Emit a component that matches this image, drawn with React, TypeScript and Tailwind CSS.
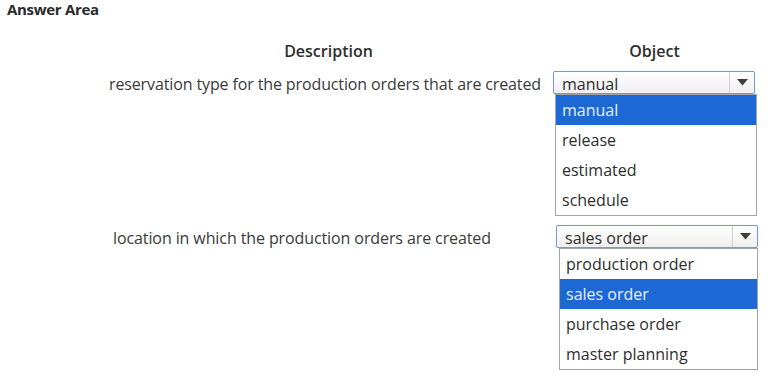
import React from "react";

function Select({ value }: { value: string }) {
  return (
    <div className="flex h-[23px] items-stretch rounded-[2px] border border-[#7d99c8] bg-gradient-to-b from-white to-[#efefef] shadow-[0_0_1px_#9fb6dc]">
      <div className="flex flex-1 items-center pl-[8px] text-[16px] leading-none text-[#2e2e2e]">
        <span className="mt-[3px]">{value}</span>
      </div>
      <div className="flex w-[25px] items-center justify-center border-l border-[#d0d0d0]">
        <svg width="11" height="7" viewBox="0 0 11 7">
          <path d="M0 0 H11 L5.5 6.5 Z" fill="#3d3d3d" />
        </svg>
      </div>
    </div>
  );
}

function List({ items, selected }: { items: string[]; selected: string }) {
  return (
    <div className="border border-[#a3a3a3] bg-white">
      {items.map((it) => (
        <div
          key={it}
          className={
            it === selected
              ? "flex h-[30px] items-center bg-[#1c68d4] pl-[6px] text-[16px] text-[#e8f0ff]"
              : "flex h-[30px] items-center pl-[6px] text-[16px] text-[#2e2e2e]"
          }
        >
          {it}
        </div>
      ))}
    </div>
  );
}

export default function App() {
  return (
    <div className="relative h-[385px] w-[771px] overflow-hidden bg-white font-['Open_Sans','Noto_Sans',sans-serif] text-[#333]">
      <div className="pl-[7px] pt-[1px] text-[15px] font-bold leading-[16px] tracking-[-0.3px] text-[#2a2a2a]">
        Answer Area
      </div>

      <div className="mt-[24px] flex">
        <div className="w-[553px] pl-[104px] text-center text-[16px] font-semibold leading-[20px] text-[#2e2e2e]">
          Description
        </div>
        <div className="w-[203px] text-center text-[16px] font-semibold leading-[20px] text-[#2e2e2e]">
          Object
        </div>
      </div>

      <div className="mt-[10px] flex">
        <div className="w-[553px] pr-[12px] pt-[3px] text-right text-[16px] leading-[20px] tracking-[-0.12px] text-[#3a3a3a]">
          reservation type for the production orders that are created
        </div>
        <div className="w-[202px]">
          <Select value="manual" />
          <div className="ml-[2px] w-[202px]">
            <List items={["manual", "release", "estimated", "schedule"]} selected="manual" />
          </div>
        </div>
      </div>

      <div className="mt-[9px] flex">
        <div className="w-[556px] pl-[113px] pt-[3px] text-[16px] leading-[20px] tracking-[-0.1px] text-[#3a3a3a]">
          location in which the production orders are created
        </div>
        <div className="w-[202px]">
          <Select value="sales order" />
          <div className="ml-[3px] w-[199px]">
            <List
              items={["production order", "sales order", "purchase order", "master planning"]}
              selected="sales order"
            />
          </div>
        </div>
      </div>
    </div>
  );
}
